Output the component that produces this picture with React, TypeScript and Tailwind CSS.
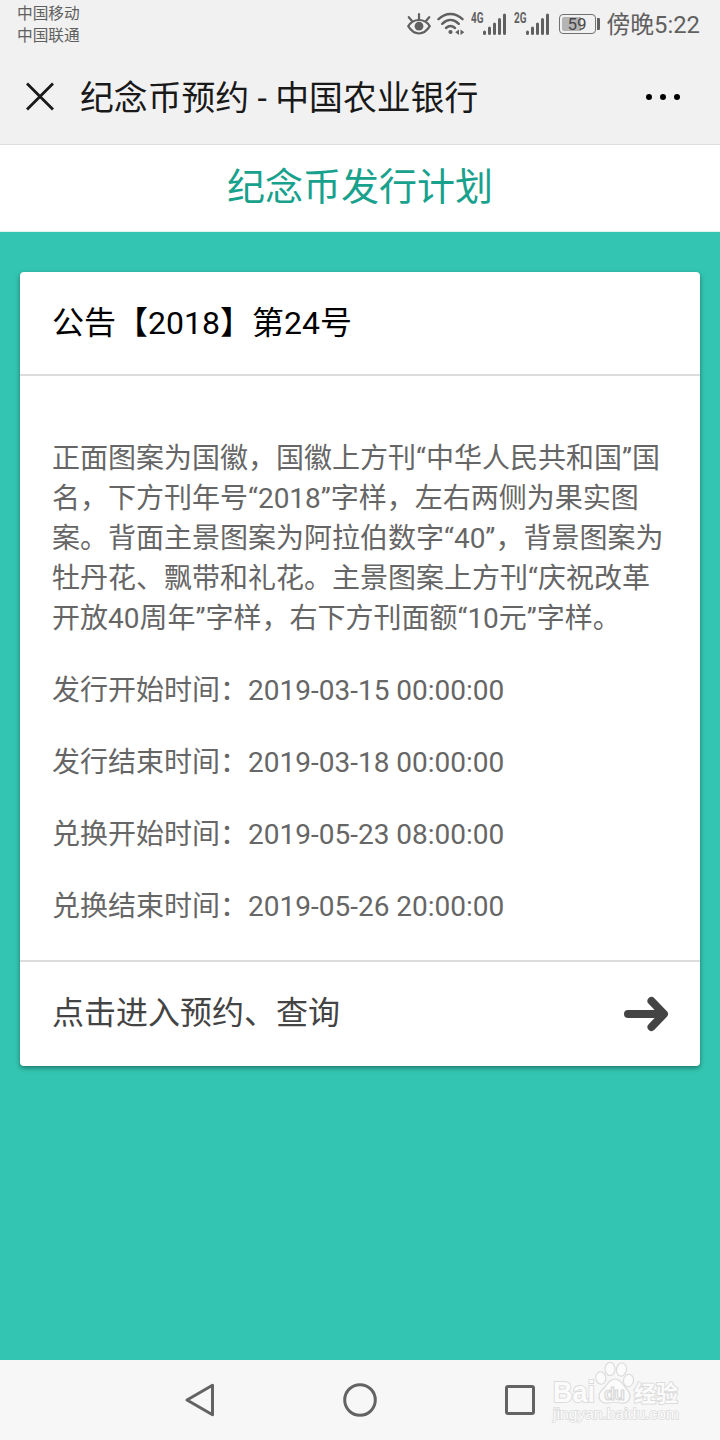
const schedule = [
	{ label: "发行开始时间：", value: "2019-03-15 00:00:00" },
	{ label: "发行结束时间：", value: "2019-03-18 00:00:00" },
	{ label: "兑换开始时间：", value: "2019-05-23 08:00:00" },
	{ label: "兑换结束时间：", value: "2019-05-26 20:00:00" },
];

const description = [
	"正面图案为国徽，国徽上方刊“中华人民共和国”国",
	"名，下方刊年号“2018”字样，左右两侧为果实图",
	"案。背面主景图案为阿拉伯数字“40”，背景图案为",
	"牡丹花、飘带和礼花。主景图案上方刊“庆祝改革",
	"开放40周年”字样，右下方刊面额“10元”字样。",
];

function EyeIcon() {
	return (
		<svg width="24" height="22" viewBox="0 0 24 22" fill="none" stroke="#606060" strokeWidth="2.200" strokeLinecap="round">
			<path d="M1.200 13.200C3.800 8.800 7.500 7 12 7s8.200 1.800 10.800 6.200C20 17.700 16.500 20.500 12 20.500S4 17.700 1.200 13.200Z" />
			<path d="M12 1.200V6M1.800 4.200l3 3.600M22.200 4.200l-3 3.600" />
			<circle cx="12" cy="13.200" r="4.400" fill="#606060" stroke="none" />
		</svg>
	);
}

function WifiIcon() {
	return (
		<svg width="28" height="24" viewBox="0 0 28 24" fill="none" stroke="#606060" strokeWidth="2.400" strokeLinecap="round">
			<path d="M1.500 7.200C8.500 .2 18.500 .2 25.500 7.200M5.200 11.800c5.200-5 11.400-5 16.600 0M9 16c3-2.700 6-2.700 9 0" />
			<circle cx="13.500" cy="20" r="2.100" fill="#606060" stroke="none" />
			<path d="M22 17.500v5.500l-3.800-2.700zM23.500 17.500v5.500l3.800-2.700z" fill="#606060" stroke="none" />
		</svg>
	);
}

function SignalIcon({ network }: { network: string }) {
	return (
		<svg className="-mt-2" width="36" height="32" viewBox="0 -8 36 32" fill="none" stroke="#606060" strokeWidth="3" strokeLinecap="round">
			<text
				x="0"
				y="10.800"
				fill="#606060"
				stroke="none"
				fontSize="14"
				fontWeight="700"
				fontFamily="Roboto, sans-serif"
				textLength="12.500"
				lengthAdjust="spacingAndGlyphs"
			>
				{network}
			</text>
			<path d="M13.500 20v1.500M18.500 16v5.500M23.500 12v9.500M28.500 7.500v14M33.500 3v18.500" />
		</svg>
	);
}

function StatusBar() {
	return (
		<div className="h-[50px] flex items-start justify-between pl-[17px] pr-5 text-[#606060]">
			<div className="pt-[3px] text-[15.700px] leading-[22px]">
				<div>中国移动</div>
				<div>中国联通</div>
			</div>
			<div className="flex items-start pt-3">
				<div className="mr-1.5 pt-[1px]">
					<EyeIcon />
				</div>
				<div className="mr-[6px]">
					<WifiIcon />
				</div>
				<div className="mr-[7px]">
					<SignalIcon network="4G" />
				</div>
				<div className="mr-[9px]">
					<SignalIcon network="2G" />
				</div>
				<div className="mt-[2px] mr-[7px] flex items-center">
					<div className="w-[37px] h-5 rounded-[4px] border border-[#707070] p-[2px]">
						<div className="relative h-full w-full">
							<div className="h-full w-[19px] rounded-l-[2px] bg-[#b4b4b4]" />
							<span className="absolute inset-0 text-center text-[17px] leading-[15px] text-[#484848]">59</span>
						</div>
					</div>
					<div className="ml-[1px] w-[3px] h-3 rounded-r-[1px] bg-[#606060]" />
				</div>
				<span className="text-[23.800px] leading-[26px]">傍晚5:22</span>
			</div>
		</div>
	);
}

function TitleBar() {
	return (
		<div className="h-[95px] flex items-center pl-6 pr-10 border-b border-[#dedede] text-[#191919]">
			<svg width="32" height="32" viewBox="0 0 32 32" stroke="#191919" strokeWidth="2.800" strokeLinecap="square">
				<path d="M4 3.500 28 27.500M28 3.500 4 27.500" />
			</svg>
			<h1 className="ml-6 flex-1 pt-1 text-[33.850px] leading-[50px]">纪念币预约 - 中国农业银行</h1>
			<div className="flex gap-2">
				<i className="size-1.5 rounded-full bg-black" />
				<i className="size-1.5 rounded-full bg-black" />
				<i className="size-1.5 rounded-full bg-black" />
			</div>
		</div>
	);
}

function NoticeCard() {
	return (
		<div className="h-[794px] flex flex-col rounded-[4px] bg-white shadow-[0_2px_5px_rgba(0,0,0,0.4)]">
			<div className="h-[104px] border-b-2 border-[#dcdcdc] px-8 pt-[27px] text-[32px] leading-[48px] text-black">
				公告【2018】第24号
			</div>
			<div className="flex-1 px-8 pt-[63px] text-[28px] leading-10 text-[#666]">
				<div className="whitespace-nowrap">
					{description.map((line) => (
						<div key={line}>{line}</div>
					))}
				</div>
				{schedule.map((item) => (
					<div key={item.label} className="mt-8 flex">
						<span>{item.label}</span>
						<span>{item.value}</span>
					</div>
				))}
			</div>
			<button className="h-[106px] flex items-center justify-between border-t-2 border-[#dcdcdc] pl-8 pr-8 text-[32px] text-[#444]">
				<span className="pb-[2px]">点击进入预约、查询</span>
				<svg width="44" height="36" viewBox="0 0 44 36" fill="none" stroke="#444" strokeWidth="8" strokeLinecap="round" strokeLinejoin="round">
					<path d="M4 18H38M27.500 5 40 18 27.500 31" />
				</svg>
			</button>
		</div>
	);
}

function Watermark() {
	return (
		<svg className="absolute left-[550px] top-0" width="132" height="66" viewBox="0 0 132 66" fill="#fbfbfb" stroke="#dcdcdc" strokeWidth="1.200">
			<g fontFamily="'Liberation Sans', 'Noto Sans CJK SC', sans-serif" paintOrder="stroke">
				<text x="3" y="42" fontSize="29" fontWeight="700" strokeWidth="2" textLength="42" lengthAdjust="spacingAndGlyphs">
					Bai
				</text>
				<text x="84" y="41" fontSize="22" fontWeight="700" strokeWidth="2" textLength="44">
					经验
				</text>
				<text x="3" y="59" fontSize="14" strokeWidth="1.500" textLength="126" lengthAdjust="spacingAndGlyphs">
					jingyan.baidu.com
				</text>
			</g>
			<ellipse cx="50.800" cy="18" rx="5" ry="6.300" transform="rotate(-10 50.800 18)" />
			<ellipse cx="60" cy="9" rx="5" ry="6.600" />
			<ellipse cx="71.500" cy="9.500" rx="5" ry="6.600" transform="rotate(10 71.500 9.500)" />
			<ellipse cx="78.500" cy="20.500" rx="5" ry="6.300" transform="rotate(12 78.500 20.500)" />
			<path d="M65 19c5 0 7 4 10 8 3 3 5 5 5 9 0 5-4 8-9 7-4-1-8-1-12 0-6 1-10-2-10-7 0-4 3-6 6-9 3-4 5-8 10-8Z" />
			<text
				x="54"
				y="40"
				fontSize="18"
				fontWeight="700"
				fill="#f4f4f4"
				stroke="#d6d6d6"
				strokeWidth="1"
				fontFamily="'Liberation Sans', sans-serif"
				textLength="21"
			>
				du
			</text>
		</svg>
	);
}

function NavBar() {
	return (
		<div className="relative h-20 flex items-center justify-center gap-[124px] bg-[#f7f7f7]">
			<svg width="36" height="36" viewBox="0 0 36 36" fill="none" stroke="#636363" strokeWidth="3" strokeLinejoin="round">
				<path d="M5 18 30.500 3.200v29.600Z" />
			</svg>
			<svg width="36" height="36" viewBox="0 0 36 36" fill="none" stroke="#636363" strokeWidth="3">
				<circle cx="18" cy="18" r="15.300" />
			</svg>
			<svg width="36" height="36" viewBox="0 0 36 36" fill="none" stroke="#636363" strokeWidth="3">
				<rect x="4.500" y="4.500" width="27" height="27" rx="1.500" />
			</svg>
			<Watermark />
		</div>
	);
}

export default function App() {
	return (
		<div className="w-[720px] h-[1440px] flex flex-col overflow-hidden bg-[#33c5b1] font-['Roboto','Noto_Sans_CJK_SC',sans-serif]">
			<header className="bg-[#f1f1f1]">
				<StatusBar />
				<TitleBar />
			</header>
			<h2 className="h-[87px] bg-white border-b border-[#dff4f1] pt-[14px] text-center text-[38px] leading-[56px] text-[#18a18c]">
				纪念币发行计划
			</h2>
			<main className="flex-1 px-5 pt-10">
				<NoticeCard />
			</main>
			<NavBar />
		</div>
	);
}
